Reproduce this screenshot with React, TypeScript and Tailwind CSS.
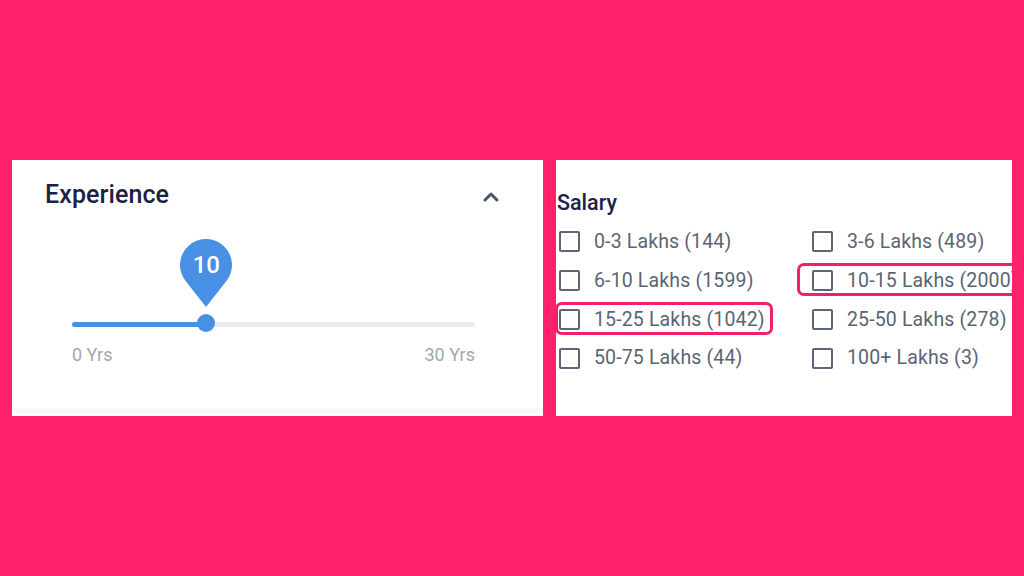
import { ChevronUp } from 'lucide-react'

const salaryRanges = [
    { label: '0-3 Lakhs', count: 144 },
    { label: '3-6 Lakhs', count: 489 },
    { label: '6-10 Lakhs', count: 1599 },
    { label: '10-15 Lakhs', count: 2000, highlight: 'right' },
    { label: '15-25 Lakhs', count: 1042, highlight: 'left' },
    { label: '25-50 Lakhs', count: 278 },
    { label: '50-75 Lakhs', count: 44 },
    { label: '100+ Lakhs', count: 3 },
]

function ExperienceSlider({ value, max }: { value: number; max: number }) {
    const pct = (value / max) * 100

    return (
        <div className="relative ml-[60px] mt-[30px] w-[403px] pt-[82.5px]">
            {/* Value pin */}
            <div className="absolute top-0 h-[68px] w-[52px] -translate-x-1/2" style={{ left: `${pct}%` }}>
                <svg width="52" height="68" viewBox="0 0 52 68" className="absolute inset-0">
                    <path d="M26 68 L5.6 42.1 A26 26 0 1 1 46.4 42.1 Z" fill="#4790e4" />
                </svg>
                <span className="absolute inset-x-0 top-0 flex h-[52px] items-center justify-center text-[24px] font-medium leading-none text-white">
                    {value}
                </span>
            </div>

            <div className="h-[5px] rounded-full bg-[#ececee]">
                <div className="h-full rounded-full bg-[#4790e4]" style={{ width: `${pct}%` }} />
            </div>

            <div
                className="absolute top-[75px] h-[18px] w-[18px] -translate-x-1/2 rounded-full bg-[#4790e4]"
                style={{ left: `${pct}%` }}
            />
        </div>
    )
}

export default function App() {
    return (
        <div className="flex h-[576px] w-[1024px] gap-[13px] bg-[#ff2169] pl-[12px] pt-[160px] font-['Roboto',sans-serif]">
            {/* Experience */}
            <div className="flex h-[256px] w-[531px] flex-col bg-white">
                <div className="flex items-start justify-between pl-[33px] pr-[40px] pt-[21px]">
                    <h3 className="text-[25px] font-medium leading-[28px] tracking-[0.1px] text-[#1c2244]">Experience</h3>
                    <ChevronUp size={24} strokeWidth={3} className="mt-[3.5px] text-[#4a5666]" />
                </div>

                <ExperienceSlider value={10} max={30} />

                <div className="ml-[60px] mt-[17px] flex w-[403px] justify-between text-[18px] leading-[22px] text-[#a3a7ad]">
                    <span>0 Yrs</span>
                    <span>30 Yrs</span>
                </div>

                <div className="mb-[2px] mt-auto h-[6px] bg-[#f8f8f8]" />
            </div>

            {/* Salary */}
            <div className="h-[256px] w-[456px] overflow-hidden bg-white pt-[30px]">
                <h3 className="ml-[1px] text-[21.5px] font-medium leading-[26px] text-[#1c2342]">Salary</h3>
                <div className="mt-[6.6px] grid grid-cols-[253px_1fr]">
                    {salaryRanges.map((range) => (
                        <div key={range.label} className="relative flex h-[38.7px] items-center gap-[14px] pl-[3px]">
                            <span className="h-[21px] w-[21px] shrink-0 rounded-[2px] border-2 border-[#5b6777]" />
                            <span className="whitespace-nowrap text-[19.5px] leading-none tracking-[0.15px] text-[#5a6574]">
                                {range.label} ({range.count})
                            </span>
                            {range.highlight === 'left' && (
                                <div className="absolute -left-px top-[2px] h-[33px] w-[218px] rounded-[7px] border-[3px] border-[#f0206a]" />
                            )}
                            {range.highlight === 'right' && (
                                <div className="absolute -right-[20px] left-[-12px] top-[2px] h-[33px] rounded-[7px] border-[3px] border-[#f0206a]" />
                            )}
                        </div>
                    ))}
                </div>
            </div>
        </div>
    )
}
